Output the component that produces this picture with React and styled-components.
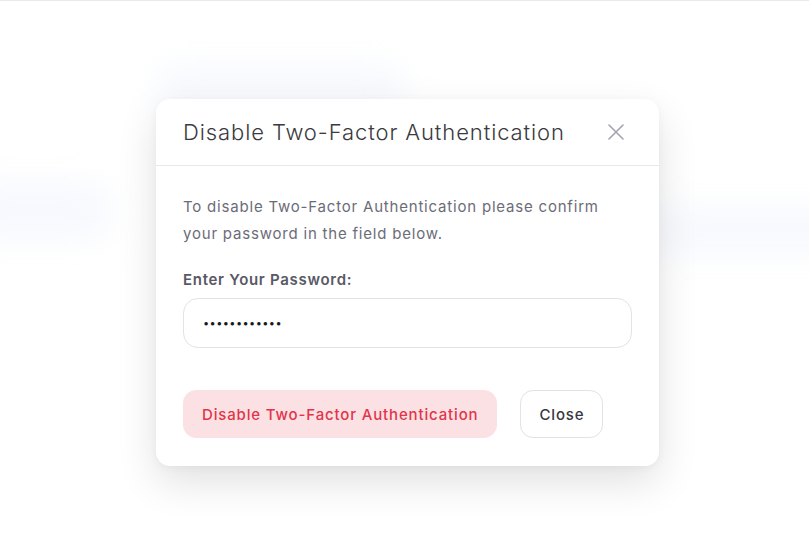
import React from "react";
import styled, { createGlobalStyle } from "styled-components";

const GlobalStyle = createGlobalStyle`
  html, body {
    margin: 0;
    padding: 0;
    background: #ffffff;
  }
  body {
    font-family: "Inter", "Noto Sans", sans-serif;
    -webkit-font-smoothing: antialiased;
  }
  * {
    box-sizing: border-box;
  }
`;

const CloseIcon = () => (
  <svg width="18" height="18" viewBox="0 0 18 18" fill="none">
    <path
      d="M2 2L16 16M16 2L2 16"
      stroke="currentColor"
      strokeWidth="1.6"
      strokeLinecap="round"
    />
  </svg>
);

const TwoFactorModal = () => {
  return (
    <Dialog role="dialog" aria-labelledby="tfa-title">
      <Header>
        <Title id="tfa-title">Disable Two-Factor Authentication</Title>
        <IconButton aria-label="Close">
          <CloseIcon />
        </IconButton>
      </Header>

      <Body>
        <Text>
          To disable Two-Factor Authentication please confirm your password in
          the field below.
        </Text>

        <Label htmlFor="tfa-password">Enter Your Password:</Label>
        <Input
          id="tfa-password"
          type="password"
          value="secretpasswd"
          readOnly
        />

        <Actions>
          <Button $variant="danger">Disable Two-Factor Authentication</Button>
          <Button>Close</Button>
        </Actions>
      </Body>
    </Dialog>
  );
};

const App = () => {
  return (
    <>
      <GlobalStyle />
      <Screen>
        <Backdrop>
          <Blob $top={66} $left={155} $w={250} $h={44} />
          <Blob $top={182} $left={-40} $w={150} $h={56} />
          <Blob $top={207} $left={650} $w={220} $h={46} />
        </Backdrop>
        <TwoFactorModal />
      </Screen>
    </>
  );
};

const Screen = styled.div`
  position: relative;
  width: 809px;
  height: 548px;
  overflow: hidden;
  border-top: 1px solid #e9e9ec;
  display: flex;
  justify-content: center;
  padding-top: 98px;
  padding-left: 6px;
`;

const Backdrop = styled.div`
  position: absolute;
  inset: 0;
  pointer-events: none;
`;

const Blob = styled.div`
  position: absolute;
  top: ${(p) => p.$top}px;
  left: ${(p) => p.$left}px;
  width: ${(p) => p.$w}px;
  height: ${(p) => p.$h}px;
  border-radius: 20px;
  background: #eef2fc;
  filter: blur(16px);
  opacity: 0.5;
`;

const Dialog = styled.div`
  position: relative;
  width: 503px;
  height: 367px;
  background: #ffffff;
  border-radius: 14px;
  box-shadow: 0 16px 40px rgba(0, 0, 0, 0.12), 0 2px 8px rgba(0, 0, 0, 0.04);
  display: flex;
  flex-direction: column;
`;

const Header = styled.div`
  display: flex;
  align-items: center;
  justify-content: space-between;
  height: 67px;
  padding: 0 34px 0 27px;
  border-bottom: 1px solid #e8e8ec;
`;

const Title = styled.h2`
  margin: 0;
  font-size: 22px;
  font-weight: 300;
  letter-spacing: 0.9px;
  color: #3a3a40;
  line-height: 1;
`;

const IconButton = styled.button`
  display: flex;
  align-items: center;
  justify-content: center;
  padding: 0;
  border: none;
  background: transparent;
  color: #a3a3b0;
  cursor: pointer;
`;

const Body = styled.div`
  display: flex;
  flex-direction: column;
  padding: 27px 27px 26px;
`;

const Text = styled.p`
  margin: 0;
  font-size: 15px;
  line-height: 27px;
  letter-spacing: 0.8px;
  color: #6c6c78;
  font-weight: 400;
`;

const Label = styled.label`
  margin-top: 23px;
  font-size: 15px;
  line-height: 20px;
  font-weight: 600;
  letter-spacing: 0.7px;
  color: #585866;
`;

const Input = styled.input`
  margin-top: 8px;
  height: 50px;
  width: 100%;
  padding: 0 19px;
  border: 1px solid #e2e2e7;
  border-radius: 15px;
  background: #ffffff;
  font-family: "Inter", sans-serif;
  font-size: 11px;
  letter-spacing: 0.4px;
  color: #1a1a1a;
  outline: none;
`;

const Actions = styled.div`
  display: flex;
  align-items: center;
  gap: 23px;
  margin-top: 42px;
`;

const Button = styled.button`
  height: 48px;
  padding: 0 18px;
  border-radius: 13px;
  font-family: "Inter", sans-serif;
  font-size: 15px;
  font-weight: 500;
  letter-spacing: 0.85px;
  cursor: pointer;
  border: 1px solid
    ${(p) => (p.$variant === "danger" ? "#fbe1e3" : "#e2e2e7")};
  background: ${(p) => (p.$variant === "danger" ? "#fbe1e3" : "#ffffff")};
  color: ${(p) => (p.$variant === "danger" ? "#e2344a" : "#38383e")};
`;

export default App;
